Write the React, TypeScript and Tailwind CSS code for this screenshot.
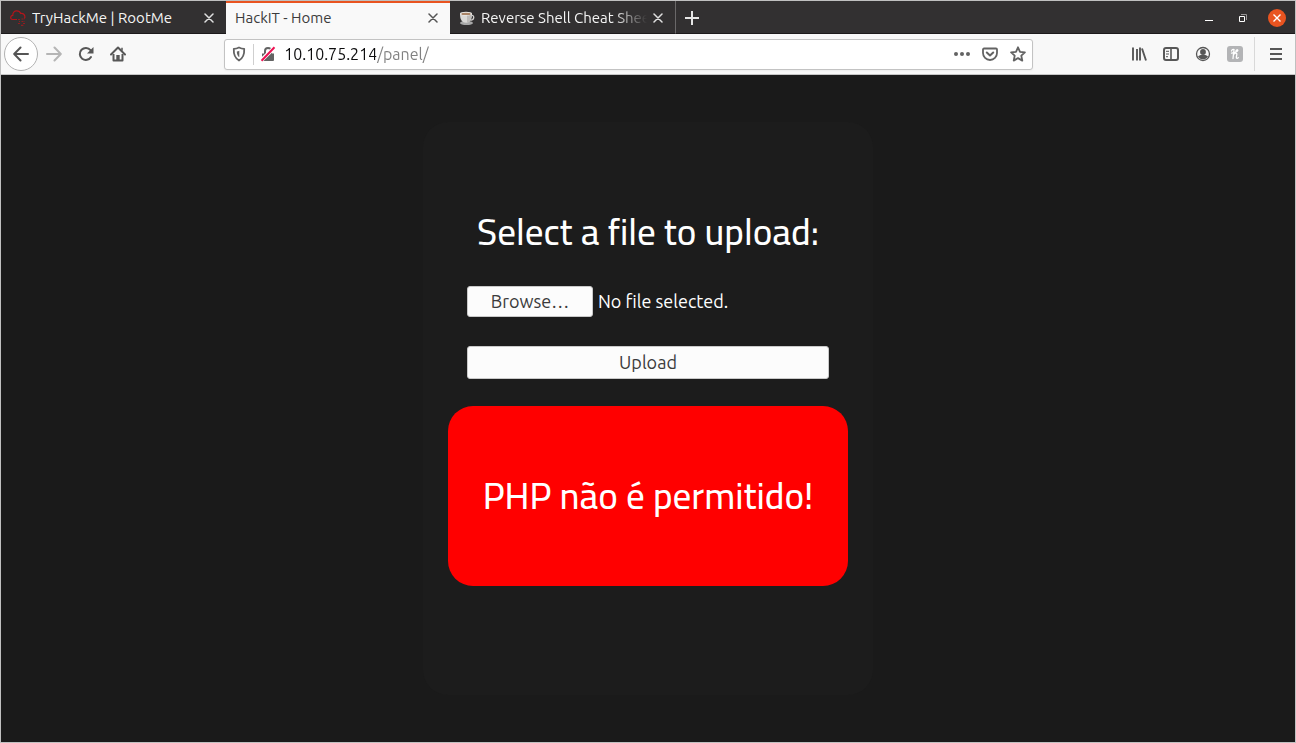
import { useRef, type ReactNode } from "react";

const uiFont = "font-['Ubuntu','Noto_Sans',sans-serif]";

function CloseIcon() {
  return (
    <svg viewBox="0 0 10 10" className="size-[10px]" fill="none" stroke="currentColor" strokeWidth="1.5" strokeLinecap="round">
      <path d="M1 1l8 8M9 1l-8 8" />
    </svg>
  );
}

function CloudFavicon() {
  return (
    <svg viewBox="0 0 16 16" className="size-4 shrink-0" fill="none" stroke="#b3151b" strokeWidth="1.2">
      <path d="M7 9.5H2.8C1 9.5.7 8.600.7 7.500c0-1.300.8-2.200 2.100-2.200C2.600 2.600 4.300.8 6.700.8c2 0 3.400 1 4 2.700 2-.3 3.600.8 4.100 2.500.3 1 .2 1.800-.4 2.500" />
      <path d="M8 9.500h2M11.500 9h3M9 11.500h1M11.500 11.500h3M8 13.500h2.500M13 13.500h2M11 15.300h3" strokeDasharray="2 .6" opacity=".75" />
    </svg>
  );
}

function CupFavicon() {
  return (
    <svg viewBox="0 0 16 16" className="size-4 shrink-0">
      <ellipse cx="7.500" cy="13" rx="6.500" ry="2" fill="#a8a8a8" />
      <path d="M12.500 5.500c3-.8 3.300 4.500-1 4.800" fill="none" stroke="#d2d0ce" strokeWidth="1.300" />
      <path d="M1 3.700c0 4.800 1.300 9 6 9s6-4.200 6-9z" fill="#d9d8d6" />
      <path d="M8 5h4.500c-.2 4-1.500 7-4.500 7.500z" fill="#bdbbb9" />
      <ellipse cx="7" cy="3.700" rx="6" ry="1.900" fill="#efeeec" />
      <ellipse cx="7" cy="3.900" rx="4.800" ry="1.200" fill="#a98467" />
    </svg>
  );
}

function Tab({ title, icon, active = false }: { title: string; icon?: ReactNode; active?: boolean }) {
  return (
    <div
      className={
        active
          ? "flex w-56 items-center gap-2 border-t-2 border-[#e95420] bg-[#f9f9f9] pr-3 pb-[2px] pl-[9px] text-[#3c3c3c]"
          : "flex w-[225px] items-center gap-[6px] border-b border-[#1c1a1b] bg-[#323031] pt-[2px] pr-3 pl-[9px] text-[#f4f4f4]"
      }
    >
      {icon}
      <button
        type="button"
        role="tab"
        aria-selected={active}
        className={
          title.length > 20
            ? "min-w-0 flex-1 overflow-hidden mask-r-from-80% text-left whitespace-nowrap"
            : "min-w-0 flex-1 overflow-hidden text-left whitespace-nowrap"
        }
      >
        {title}
      </button>
      <button type="button" aria-label={`Close ${title}`} className={active ? "text-[#555]" : "text-[#e0e0e0]"}>
        <CloseIcon />
      </button>
    </div>
  );
}

function TabBar() {
  return (
    <div className="flex h-[33px] bg-[#323031] text-[15px] leading-5">
      <div role="tablist" className="flex">
        <Tab title="TryHackMe | RootMe" icon={<CloudFavicon />} />
        <Tab title="HackIT - Home" active />
        <Tab title="Reverse Shell Cheat Sheet" icon={<CupFavicon />} />
      </div>
      <div className="flex flex-1 items-center justify-between border-b border-l border-b-[#1c1a1b] border-l-[#6a6869] pt-px pr-[9px] pl-[9px] text-[#e6e6e6]">
        <button type="button" aria-label="New tab">
          <svg viewBox="0 0 14 14" className="size-[14px]" stroke="currentColor" strokeWidth="2">
            <path d="M7 0v14M0 7h14" />
          </svg>
        </button>
        <div className="flex items-center gap-5">
          <button type="button" aria-label="Minimize">
            <svg viewBox="0 0 14 18" className="h-[18px] w-[14px]" stroke="#fff" strokeWidth="1">
              <path d="M5 11.500h8" />
            </svg>
          </button>
          <button type="button" aria-label="Restore">
            <svg viewBox="0 0 14 18" className="h-[18px] w-[14px]" fill="none">
              <path d="M7 5.500h5.500V11" stroke="#989697" />
              <path d="M5.500 7.500h5v5h-5z" stroke="#fff" />
            </svg>
          </button>
          <button
            type="button"
            aria-label="Close window"
            className="flex size-[18px] items-center justify-center rounded-full bg-[#e95420] text-white"
          >
            <svg viewBox="0 0 8 8" className="size-2" stroke="currentColor" strokeWidth="1.400">
              <path d="M.5.5l7 7M7.500.5l-7 7" />
            </svg>
          </button>
        </div>
      </div>
    </div>
  );
}

function ToolButton({ label, children }: { label: string; children: ReactNode }) {
  return (
    <button type="button" aria-label={label} className="flex size-8 items-center justify-center">
      <svg viewBox="0 0 16 16" className="size-4" fill="none" stroke="#575757" strokeWidth="2">
        {children}
      </svg>
    </button>
  );
}

function FieldIcon({ label, children }: { label: string; children: ReactNode }) {
  return (
    <button type="button" aria-label={label} className="flex w-7 items-center justify-center">
      <svg viewBox="0 0 16 16" className="size-4" fill="none" stroke="#636363" strokeWidth="2">
        {children}
      </svg>
    </button>
  );
}

function AddressBar() {
  return (
    <div className="flex h-[31px] min-w-0 flex-1 rounded-[3px] border border-[#c3c3c3] bg-white shadow-xs">
      <FieldIcon label="Tracking protection">
        <path d="M8 1.500c1.800.9 3.500 1.300 5.200 1.400.3 5.500-1.200 9.300-5.200 11.600C4 12.200 2.500 8.400 2.800 2.900 4.500 2.800 6.200 2.400 8 1.500z" strokeLinejoin="round" strokeWidth="1.800" />
        <path d="M8.300 4.800v6.500C6.500 10 5.800 8 5.800 5.500c.9-.1 1.800-.3 2.500-.7z" fill="#636363" stroke="none" />
      </FieldIcon>
      <span className="my-1 w-px bg-[#cfcfcf]" />
      <FieldIcon label="Connection is not secure">
        <path d="M5 8V5a3 3 0 016 0v3" />
        <path d="M2 7.500h12V14a1 1 0 01-1 1H3a1 1 0 01-1-1z" fill="#636363" stroke="none" />
        <path d="M1 14.500L15 1" stroke="#fff" strokeWidth="4" />
        <path d="M1.500 14.700L14.500 1.300" stroke="#ed1152" strokeWidth="2" />
      </FieldIcon>
      <input
        aria-label="Address"
        defaultValue="10.10.75.214/panel/"
        className="min-w-0 flex-1 bg-[linear-gradient(90deg,#0c0c0d_94px,#808080_94px)] bg-clip-text pl-[2px] text-[16px] text-transparent caret-black outline-none"
      />
      <FieldIcon label="Page actions">
        <g fill="#636363" stroke="none">
          <circle cx="2" cy="8" r="2" />
          <circle cx="8" cy="8" r="2" />
          <circle cx="14" cy="8" r="2" />
        </g>
      </FieldIcon>
      <FieldIcon label="Save to Pocket">
        <path d="M1 3.500a1 1 0 011-1h12a1 1 0 011 1v3.500a7 7 0 01-14 0z" strokeWidth="1.800" />
        <path d="M4.800 6.500L8 9.500l3.200-3" strokeLinecap="round" strokeLinejoin="round" />
      </FieldIcon>
      <FieldIcon label="Bookmark this page">
        <path d="M8 1.300l2 4.500 4.900.6-3.600 3.300 1 4.900L8 12.100l-4.300 2.500 1-4.900L1.100 6.400 6 5.800z" strokeLinejoin="round" strokeWidth="1.800" />
      </FieldIcon>
    </div>
  );
}

function Toolbar() {
  return (
    <div className="flex h-[41px] items-center border-b border-[#c6c6c6] bg-[#f8f8f8] px-[3px]">
      <button
        type="button"
        aria-label="Back"
        className="flex size-[34px] items-center justify-center rounded-full border border-[#b2b2b2] bg-white"
      >
        <svg viewBox="0 0 16 16" className="size-4" fill="none" stroke="#555" strokeWidth="2" strokeLinecap="round" strokeLinejoin="round">
          <path d="M7.500 1.500L1.200 8l6.300 6.500M1.500 8H15" />
        </svg>
      </button>
      <ToolButton label="Forward">
        <path d="M8.500 1.500L14.800 8l-6.300 6.500M14.500 8H1" stroke="#b5b5b5" strokeLinecap="round" strokeLinejoin="round" />
      </ToolButton>
      <ToolButton label="Reload">
        <path d="M13 11A6 6 0 1 1 12.500 4.200" strokeLinecap="round" />
        <path d="M15.500 1v6.500H9z" fill="#575757" stroke="none" />
      </ToolButton>
      <ToolButton label="Home">
        <path d="M1 8.500L8 1.500l7 7" strokeLinecap="round" strokeLinejoin="round" />
        <path d="M3.500 8v6.500h9V8" strokeLinejoin="round" />
        <path d="M6.300 14.500V9h3.400v5.500z" fill="#575757" stroke="none" />
        <path d="M12 1.800v3" strokeWidth="1.500" />
      </ToolButton>
      <span className="w-[7%]" />
      <AddressBar />
      <span className="w-[7%]" />
      <ToolButton label="Library">
        <path d="M2 1.500v13M6 3v11.500M9 1.500v13M11 2.500l4 12" strokeWidth="1.900" />
      </ToolButton>
      <ToolButton label="Sidebars">
        <rect x="1" y="2" width="14" height="12" rx="2" strokeWidth="2" />
        <path d="M8 2v12" strokeWidth="1.600" />
        <path d="M3 5.300h3M3 8h3M3 10.700h2" strokeWidth="1" />
      </ToolButton>
      <ToolButton label="Account">
        <circle cx="8" cy="8" r="6.500" strokeWidth="1.300" />
        <circle cx="8" cy="6" r="2.900" fill="#575757" stroke="none" />
        <path d="M3 10.200c1.500-.8 2.500-1.200 3.500-1.200h3c1 0 2 .4 3.500 1.200A5.500 5.500 0 018 13.300a5.500 5.500 0 01-5-3.100z" fill="#575757" stroke="none" />
      </ToolButton>
      <ToolButton label="Honey">
        <rect width="16" height="16" rx="3" fill="#b3b4b6" stroke="none" />
        <path d="M4.500 5C5 3.500 6 3 7 3.500L6 12.500M6.300 9c1.200-2.300 3.900-2.500 3.500-.3L9.300 11.300c-.1 1.300 1.200 1.300 2 .3M4.500 7.200C7.500 6.500 10.500 6 10.800 4.500c.1-1-1.300-1-1.800.2" stroke="#fff" strokeWidth="1.300" strokeLinecap="round" />
      </ToolButton>
      <span className="mr-[5px] ml-[3px] h-[34px] w-px bg-[#d9d9d9]" />
      <ToolButton label="Open menu">
        <path d="M2 3h12M2 8h12M2 13h12" />
      </ToolButton>
    </div>
  );
}

function UploadPage() {
  const fileRef = useRef<HTMLInputElement>(null);
  const buttonStyle = "rounded-[3px] border border-[#c9c9c9] bg-[#fcfcfc] text-[#3b3b3b]";
  const titleStyle = "font-['Cairo','Ubuntu','Noto_Sans',sans-serif] text-[37px] leading-[60px] font-medium whitespace-nowrap";

  return (
    <main className="flex flex-1 items-start justify-center bg-[#1a1a1a] px-4 py-[47px] text-[18px] text-white">
      <section className="flex w-full max-w-[450px] flex-col items-center rounded-[25px] bg-[#1c1c1c] px-[25px] pt-20 pb-[109px]">
        <form className="w-full px-[19px]" onSubmit={(event) => event.preventDefault()}>
          <h1 className={`text-center ${titleStyle}`}>Select a file to upload:</h1>
          <div className="mt-6 flex items-center gap-[5px]">
            <input ref={fileRef} type="file" aria-label="Select a file to upload" className="hidden" />
            <button type="button" onClick={() => fileRef.current?.click()} className={`h-[31px] w-[126px] ${buttonStyle}`}>
              Browse…
            </button>
            <span>No file selected.</span>
          </div>
          <button type="submit" className={`mt-[29px] h-[33px] w-full ${buttonStyle}`}>
            Upload
          </button>
        </form>
        <div role="alert" className="mt-[27px] flex h-[180px] w-full items-center justify-center rounded-[25px] bg-[#ff0000]">
          <p className={titleStyle}>PHP não é permitido!</p>
        </div>
      </section>
    </main>
  );
}

export default function App() {
  return (
    <div className={`flex min-h-screen flex-col border border-[#c0c0c0] ${uiFont}`}>
      <TabBar />
      <Toolbar />
      <UploadPage />
    </div>
  );
}
